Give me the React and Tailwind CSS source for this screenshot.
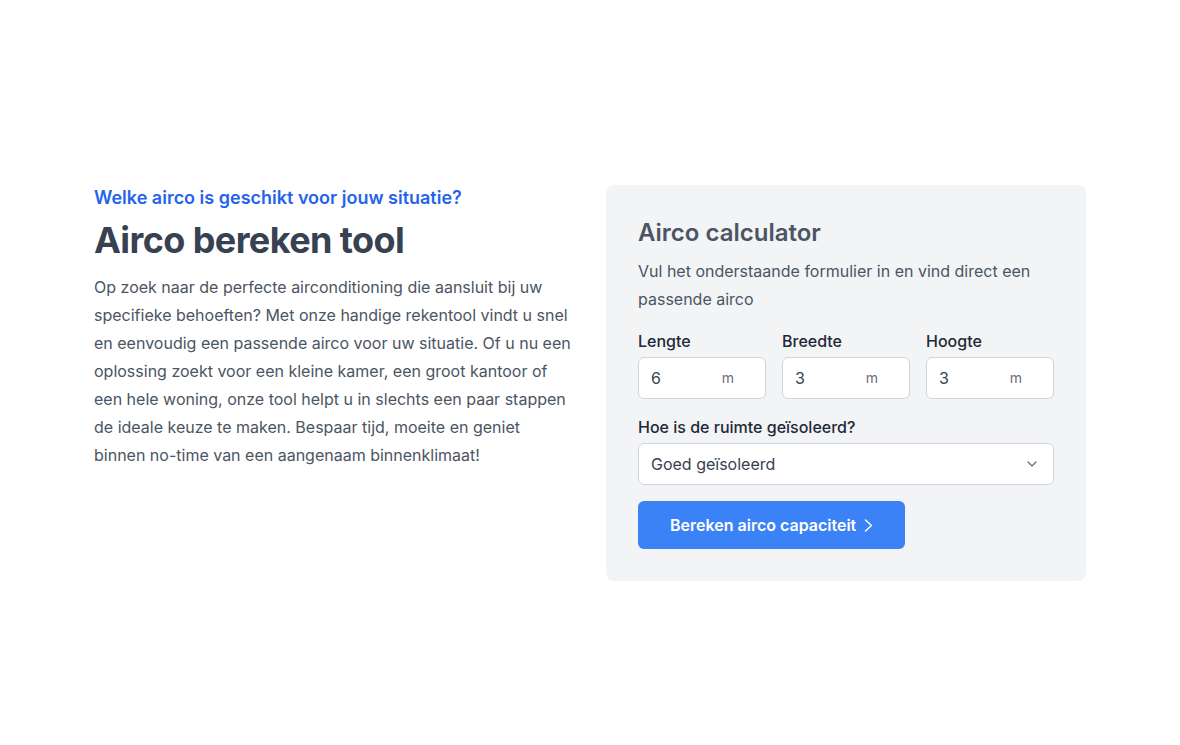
import React from 'react';
import { ChevronDown } from 'lucide-react';

const fields = [
  { label: 'Lengte', value: '6' },
  { label: 'Breedte', value: '3' },
  { label: 'Hoogte', value: '3' },
];

const App = () => {
  return (
    <div className="min-h-[745px] bg-white font-['Inter',sans-serif]">
      <div className="mx-auto max-w-5xl px-4 pt-[185px]">
        <div className="grid grid-cols-2 gap-8">
          {/* Left - intro text */}
          <div className="-mt-px">
            <p className="text-lg font-semibold leading-7 text-[#2563eb]">
              Welke airco is geschikt voor jouw situatie?
            </p>
            <h1 className="mt-2 text-4xl font-bold leading-10 tracking-[-0.6px] text-[#374151]">
              Airco bereken tool
            </h1>
            <p className="mt-[13px] text-base leading-7 text-[#4b5563]">
              Op zoek naar de perfecte airconditioning die aansluit bij uw specifieke behoeften? Met onze handige
              rekentool vindt u snel en eenvoudig een passende airco voor uw situatie. Of u nu een oplossing zoekt
              voor een kleine kamer, een groot kantoor of een hele woning, onze tool helpt u in slechts een paar
              stappen de ideale keuze te maken. Bespaar tijd, moeite en geniet binnen no-time van een aangenaam
              binnenklimaat!
            </p>
          </div>

          {/* Right - calculator card */}
          <div className="rounded-lg bg-[#f3f4f6] p-8">
            <h2 className="text-2xl font-semibold leading-8 text-[#4b5563]">Airco calculator</h2>
            <p className="mt-2 text-base leading-7 text-[#4b5563]">
              Vul het onderstaande formulier in en vind direct een passende airco
            </p>

            <div className="mt-4 grid grid-cols-3 gap-4">
              {fields.map((f) => (
                <div key={f.label}>
                  <label className="block text-base font-medium leading-6 text-[#1f2937]">{f.label}</label>
                  <div className="relative mt-1">
                    <input
                      type="text"
                      defaultValue={f.value}
                      className="block h-[42px] w-full rounded-md border border-[#d1d5db] bg-white px-3 text-base text-[#374151] outline-none"
                    />
                    <span className="absolute right-[32px] top-1/2 -translate-y-1/2 text-sm text-[#6b7280]">m</span>
                  </div>
                </div>
              ))}
            </div>

            <div className="mt-4">
              <label className="block text-base font-medium leading-6 text-[#1f2937]">
                Hoe is de ruimte geïsoleerd?
              </label>
              <div className="relative mt-1">
                <select
                  defaultValue="goed"
                  className="block h-[42px] w-full appearance-none rounded-md border border-[#d1d5db] bg-white px-3 text-base text-[#374151] outline-none"
                >
                  <option value="goed">Goed geïsoleerd</option>
                  <option value="matig">Matig geïsoleerd</option>
                  <option value="slecht">Slecht geïsoleerd</option>
                </select>
                <ChevronDown
                  className="pointer-events-none absolute right-[14px] top-1/2 h-4 w-4 -translate-y-1/2 text-[#6b7280]"
                  strokeWidth={2}
                />
              </div>
            </div>

            <button className="mt-4 flex h-12 items-center rounded-md bg-[#3b82f6] px-8 text-base font-semibold text-white">
              Bereken airco capaciteit
              <svg className="ml-2" width="9" height="13" viewBox="0 0 9 13" fill="none">
                <path d="M1.5 1l6 5.5-6 5.5" stroke="currentColor" strokeWidth="1.5" strokeLinecap="round" strokeLinejoin="round" />
              </svg>
            </button>
          </div>
        </div>
      </div>
    </div>
  );
};

export default App;
